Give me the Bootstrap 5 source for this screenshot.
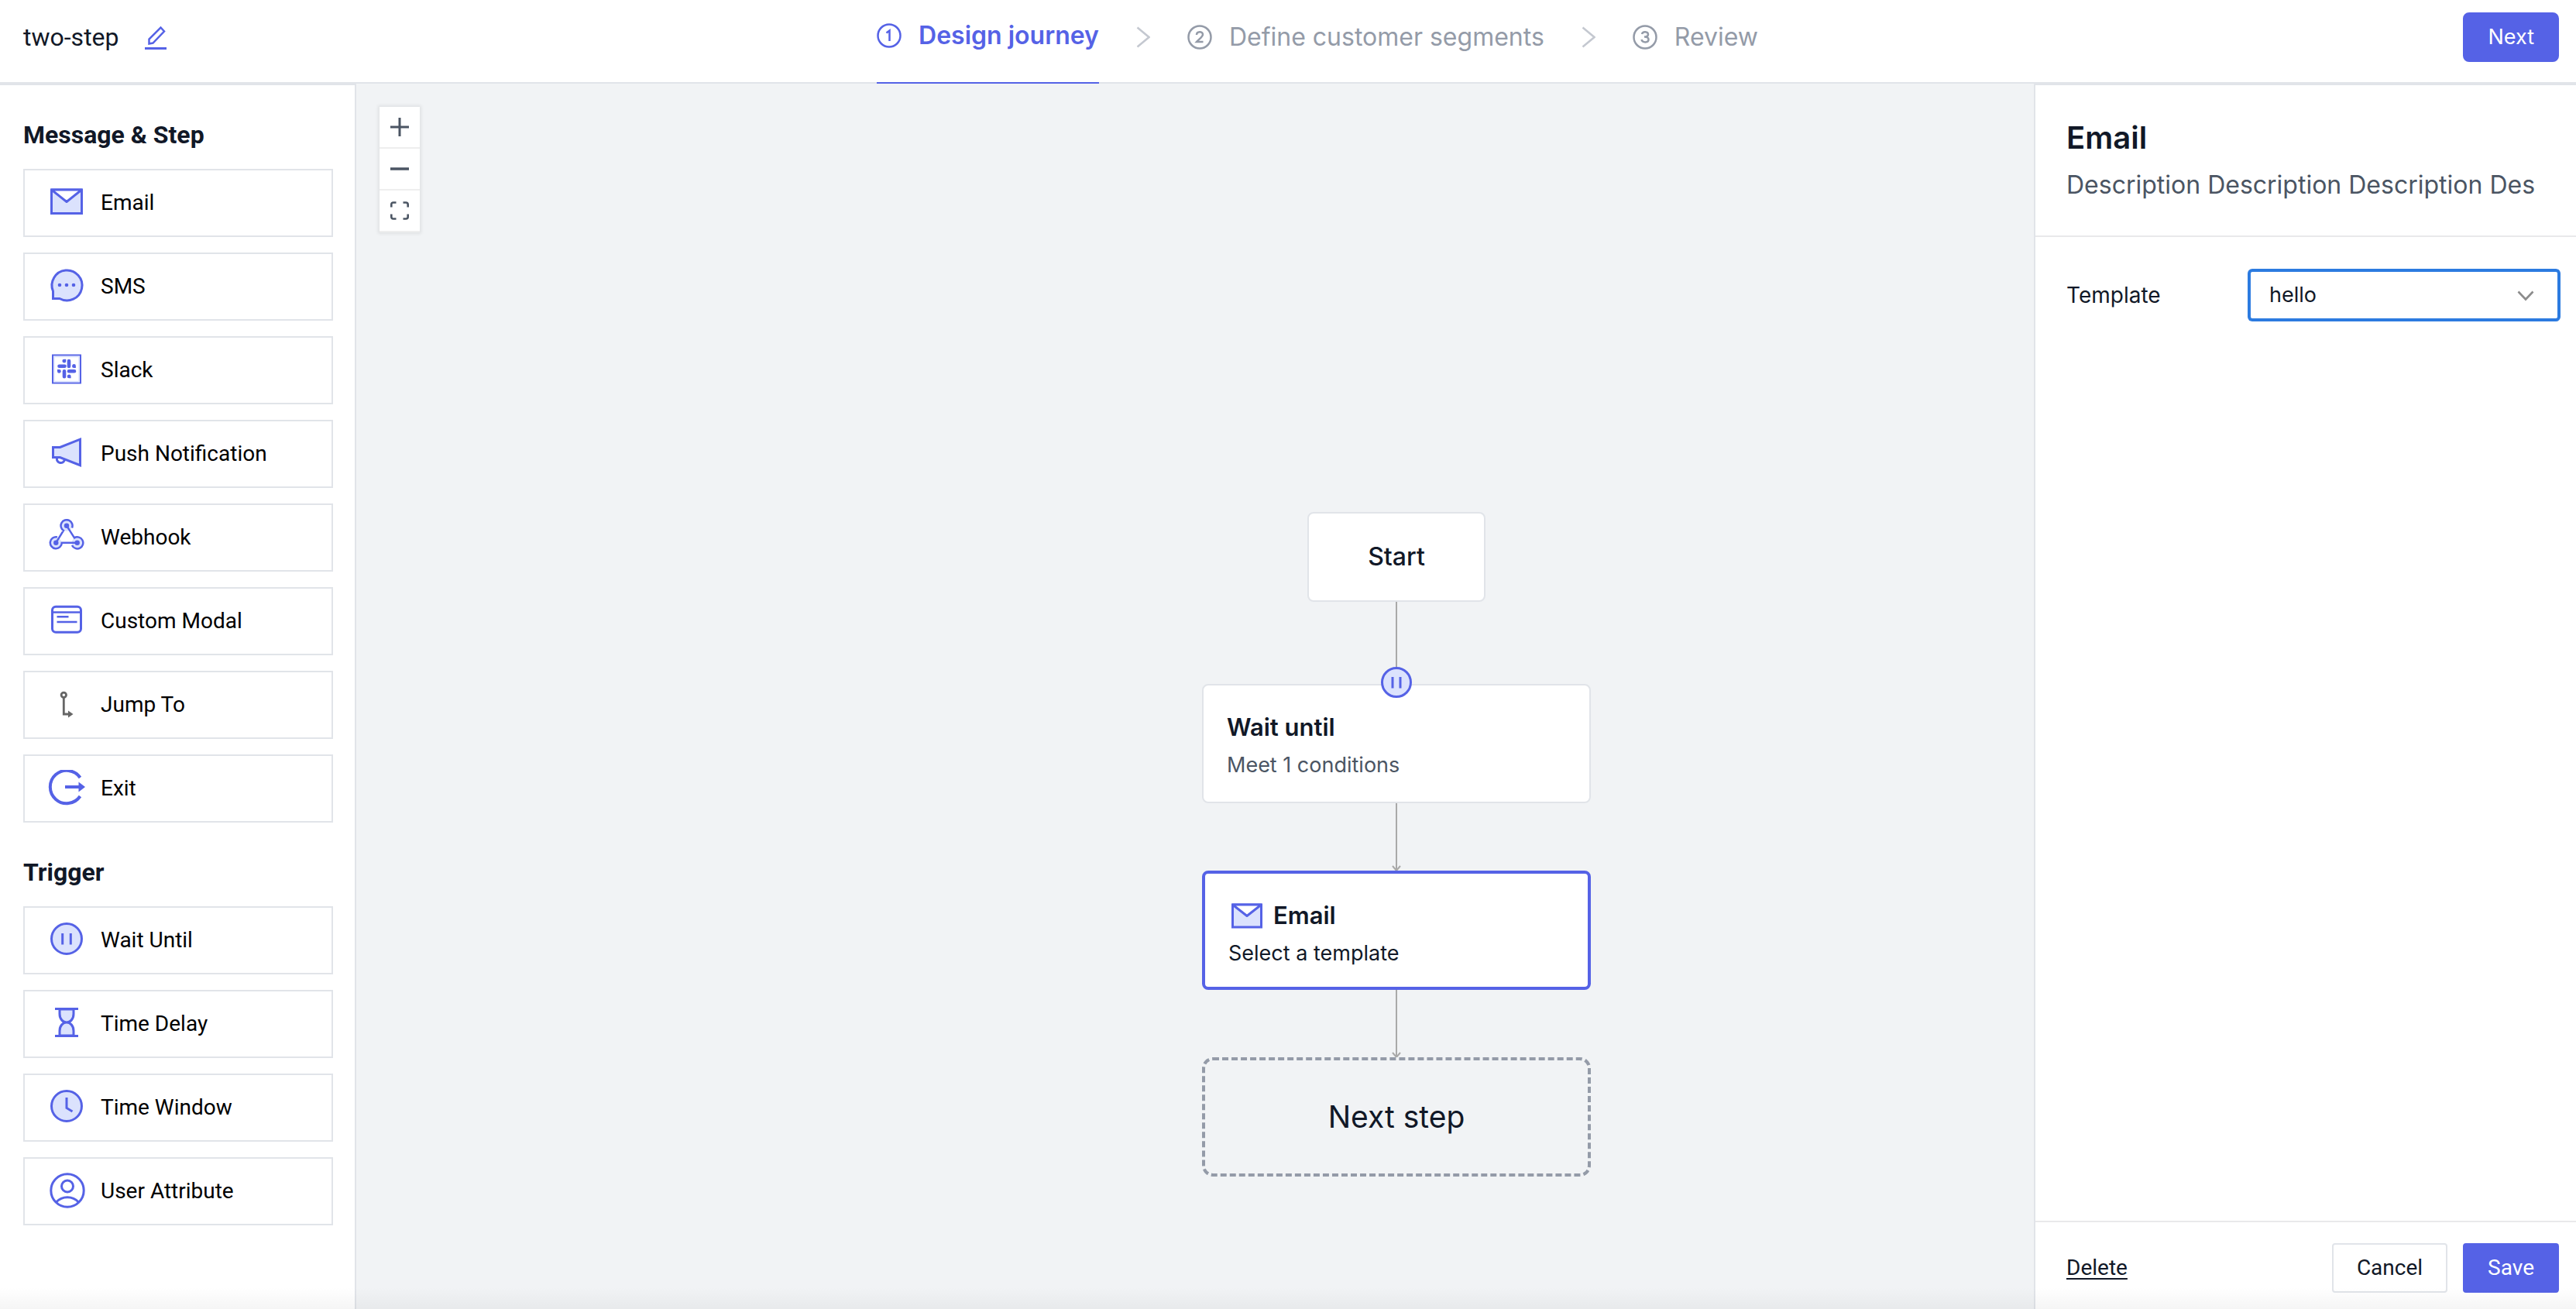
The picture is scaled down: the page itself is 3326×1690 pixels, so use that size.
<!DOCTYPE html>
<html lang="en">
<head>
<meta charset="utf-8">
<meta name="viewport" content="width=device-width, initial-scale=1">
<title>two-step</title>
<link href="https://cdn.jsdelivr.net/npm/bootstrap@5.3.0/dist/css/bootstrap.min.css" rel="stylesheet">
<style>
  :root { --accent:#5562e6; --tint:#dbe2fd; --ink:#111827; --soft:#4b5563; --muted:#949ba8; --line:#e1e4e9; --canvas:#f1f3f5; }
  body { font-family:Inter,"Liberation Sans",sans-serif; font-size:28px; line-height:40px; color:var(--ink); background:#fff; }
  h1, h2, p { margin:0; }
  .roboto { font-family:Roboto,"Liberation Sans",sans-serif; }
  .btn { --bs-btn-font-size:28px; --bs-btn-line-height:40px; --bs-btn-padding-x:30px; --bs-btn-padding-y:10px; --bs-btn-border-radius:4px; --bs-btn-border-width:2px; }
  .btn-accent { --bs-btn-color:#fff; --bs-btn-bg:var(--accent); --bs-btn-border-color:var(--accent); --bs-btn-hover-color:#fff; --bs-btn-hover-bg:#4350d4; }
  .btn-plain { --bs-btn-color:var(--ink); --bs-btn-bg:#fff; --bs-btn-border-color:var(--line); --bs-btn-hover-bg:#f6f7f9; }
  .btn-next { --bs-btn-border-radius:8px; --bs-btn-font-size:27px; }

  .topbar { height:108px; padding:0 22px 10px 30px; border-bottom:2px solid var(--line); }
  .journey-name { font-size:32px; font-weight:400; }
  .steps { font-size:32px; gap:48px; color:var(--muted); }
  .step { gap:22px; color:inherit; text-decoration:none; }
  .step.active { color:var(--accent); font-weight:600; height:108px; margin-bottom:-12px; padding-bottom:14px; border-bottom:2px solid var(--accent); }

  .palette { width:460px; padding:44px 28px 28px 30px; border-top:2px solid var(--line); border-right:2px solid var(--line); }
  .palette h2 { font-size:32px; font-weight:700; line-height:40px; margin-bottom:24px; }
  .palette ul { gap:20px; margin-bottom:44px; }
  .tile { height:88px; width:100%; gap:20px; padding:0 30px; background:#fff; border:2px solid var(--line); color:#000; text-align:left; }
  .ico { fill:none; stroke:var(--accent); stroke-width:3; flex:none; }
  .t { fill:var(--tint); } .s { fill:var(--accent); stroke:none; }

  .board { background:var(--canvas); }
  .zoomer { left:30px; top:30px; width:52px; box-shadow:0 0 4px 2px rgba(0,0,0,.07); }
  .zoomer button { height:54px; border:0; border-bottom:2px solid #eee; background:#fff; padding:0; }
  .flow { left:1092px; top:553px; width:502px; }
  .node { width:100%; height:154px; background:#fff; border:2px solid var(--line); border-radius:8px; padding:30px; }
  .node h2 { font-size:31px; font-weight:600; line-height:48px; }
  .node p { font-size:27px; line-height:50px; }
  .node-start { width:230px; height:116px; font-size:32px; font-weight:500; }
  .node-picked { border:4px solid var(--accent); }
  .node-open { background:none; border:4px dashed var(--muted); border-radius:14px; font-size:39px; color:var(--ink); }
  .edge { display:block; stroke:#a9a9a9; stroke-width:2; fill:none; }
  .pause { top:-26px; left:50%; margin-left:-22px; }

  .inspector { width:700px; border-top:2px solid var(--line); border-left:2px solid var(--line); }
  .inspector-head { padding:40px 0 32px 40px; border-bottom:2px solid #e9e9eb; }
  .inspector-head h2 { font-size:40px; font-weight:600; line-height:56px; }
  .inspector-head p { width:606px; font-size:32px; line-height:66px; color:var(--soft); white-space:nowrap; overflow:hidden; }
  .field { padding:43px 22px 0 40px; }
  .field label { line-height:64px; }
  .picker { width:400px; height:64px; }
  .picker select { height:64px; border:2px solid #2c7be0; border-radius:4px; box-shadow:0 0 0 2px #2c7be0; font-size:27px; line-height:40px; padding:0 60px 0 24px; background:#fff; color:var(--ink); }
  .picker svg { right:32px; top:26px; pointer-events:none; }
  .inspector-foot { padding:27px 22px 21px 40px; gap:20px; border-top:2px solid #e9e9eb; }
  .inspector-foot a { color:var(--ink); text-underline-offset:4px; }
  .fade-edge { height:28px; background:linear-gradient(rgba(0,0,0,0),rgba(0,0,0,.04)); pointer-events:none; }
</style>
</head>
<body class="vh-100 d-flex flex-column overflow-hidden position-relative">

<header class="topbar d-flex align-items-center justify-content-between flex-shrink-0">
  <div class="d-flex align-items-center">
    <h1 class="journey-name roboto">two-step</h1>
    <button type="button" class="border-0 bg-transparent p-0 ms-4 d-flex" aria-label="Rename">
      <svg class="ico" width="44" height="44" viewBox="0 0 44 44" stroke-width="3"><path d="M9 36.500h28" stroke-width="3"/><path d="M14.500 30.500v-6L29.500 9.500l4.500 5L19.500 29.500z" stroke-width="2.500"/></svg>
    </button>
  </div>
  <nav class="steps d-flex align-items-center" aria-label="Progress">
    <a href="#" class="step active d-flex align-items-center"><svg width="32" height="32" viewBox="0 0 32 32" fill="none" stroke="currentColor" stroke-width="2.500"><circle cx="16" cy="16" r="14.500"/><path d="M12.500 12.500L16.500 9.500V23"/></svg>Design journey</a>
    <svg width="18" height="28" viewBox="0 0 18 28" fill="none" stroke="#c4c8d0" stroke-width="2.500"><path d="M1.500 1.500L16.500 14L1.500 26.500"/></svg>
    <a href="#" class="step d-flex align-items-center"><svg width="32" height="32" viewBox="0 0 32 32" fill="none" stroke="currentColor" stroke-width="2.500"><circle cx="16" cy="16" r="14.500"/><path d="M12 13c0-5 8-5 8-.5 0 3-5 6-8 9.500h8.500"/></svg>Define customer segments</a>
    <svg width="18" height="28" viewBox="0 0 18 28" fill="none" stroke="#c4c8d0" stroke-width="2.500"><path d="M1.500 1.500L16.500 14L1.500 26.500"/></svg>
    <a href="#" class="step d-flex align-items-center"><svg width="32" height="32" viewBox="0 0 32 32" fill="none" stroke="currentColor" stroke-width="2.500"><circle cx="16" cy="16" r="14.500"/><path d="M12 12c1-4 8-3.500 8 .5 0 2-2 3-5 3 3.500 0 5.500 1 5.500 3.500 0 4.500-8 4.500-9 0"/></svg>Review</a>
  </nav>
  <button type="button" class="btn btn-accent btn-next">Next</button>
</header>

<main class="d-flex flex-grow-1">
  <aside class="palette roboto flex-shrink-0">
    <h2>Message &amp; Step</h2>
    <ul class="list-unstyled d-flex flex-column">
      <li><button type="button" class="tile d-flex align-items-center"><svg class="ico" width="48" height="48" viewBox="0 0 48 48"><path class="t" d="M4.500 7h39v30.500h-39z"/><path d="M4.500 7h39L24 22.500z" fill="#fff" stroke-linejoin="round"/></svg>Email</button></li>
      <li><button type="button" class="tile d-flex align-items-center"><svg class="ico" width="48" height="48" viewBox="0 0 48 48"><path class="t" d="M6.500 39.500V30A19.500 19.500 0 1 1 15 39.500z"/><g class="s"><circle cx="15" cy="22" r="2.300"/><circle cx="24" cy="22" r="2.300"/><circle cx="33" cy="22" r="2.300"/></g></svg>SMS</button></li>
      <li><button type="button" class="tile d-flex align-items-center"><svg class="ico" width="48" height="48" viewBox="0 0 48 48"><path d="M6 4.500h36v36H6z" stroke-width="2"/><path d="M8 6.500h32v32H8z" stroke="#dbe2fd" stroke-width="1.500"/><path d="M27 12v7M14.500 18.700h7M27 25.200h7M21 25.200v7M20.700 12h.3v.3M33.300 18.700h.3v-.3M14.500 25.200h-.2v.3M27 32h.3v-.3" stroke-width="4.600" stroke-linecap="round"/></svg>Slack</button></li>
      <li><button type="button" class="tile d-flex align-items-center"><svg class="ico" width="48" height="48" viewBox="0 0 48 48"><path class="t" d="M6.500 15.500h9L41.500 5.200v33.500L15.500 28.500h-9z"/><path d="M11.500 29.500a5 5 0 1 0 10 2"/></svg>Push Notification</button></li>
      <li><button type="button" class="tile d-flex align-items-center"><svg class="ico" width="48" height="48" viewBox="0 0 48 48"><g class="t" stroke="none"><circle cx="24" cy="8.700" r="7"/><circle cx="10.300" cy="30.700" r="7"/><circle cx="37.700" cy="30.700" r="7"/></g><g class="s"><circle cx="24" cy="8.700" r="3.200"/><circle cx="10.300" cy="30.700" r="3.200"/><circle cx="37.700" cy="30.700" r="3.200"/></g><path stroke-width="2.500" d="M10.300 30.700L20 15A7.500 7.500 0 1 1 31 11.500M24 8.700l10 15.700a7.500 7.500 0 1 1-3 9.600M37.700 30.700H17.800A7.500 7.500 0 1 1 12 23.400"/></svg>Webhook</button></li>
      <li><button type="button" class="tile d-flex align-items-center"><svg class="ico" width="48" height="48" viewBox="0 0 48 48"><rect x="5.500" y="5.200" width="37" height="33" rx="4.500"/><path stroke-width="2.500" d="M6 12.500h36M11.500 18.300h15M11.500 25h26"/></svg>Custom Modal</button></li>
      <li><button type="button" class="tile d-flex align-items-center"><svg class="ico" width="48" height="48" viewBox="0 0 48 48"><g stroke="#666" stroke-width="2.800"><circle cx="20.300" cy="11.300" r="3.200"/><path d="M20.300 15v21H27"/></g><path d="M26 31.500l6.500 4.500-6.500 4.500z" fill="#666" stroke="none"/></svg>Jump To</button></li>
      <li><button type="button" class="tile d-flex align-items-center"><svg class="ico" width="48" height="48" viewBox="0 0 48 48"><path stroke-width="4" d="M41.500 10A21.200 21.200 0 1 0 41.500 34M22 22h18"/><path class="s" d="M39.500 15.500L48 22l-8.500 6.500z"/></svg>Exit</button></li>
    </ul>
    <h2>Trigger</h2>
    <ul class="list-unstyled d-flex flex-column">
      <li><button type="button" class="tile d-flex align-items-center"><svg class="ico" width="48" height="48" viewBox="0 0 48 48"><circle class="t" cx="24" cy="22" r="19.500"/><path d="M18.700 15v14.500M29.300 15v14.500"/></svg>Wait Until</button></li>
      <li><button type="button" class="tile d-flex align-items-center"><svg class="ico" width="48" height="48" viewBox="0 0 48 48"><path class="t" d="M15 5v6c0 7 4.500 11 9 11s9-4 9-11V5zM15 39v-6c0-7 4.500-11 9-11s9 4 9 11v6z"/><path d="M9 4.500h30M9 39.500h30"/></svg>Time Delay</button></li>
      <li><button type="button" class="tile d-flex align-items-center"><svg class="ico" width="48" height="48" viewBox="0 0 48 48"><circle class="t" cx="24" cy="22" r="19.500"/><path d="M24 11v13.500l7.500 4.500"/></svg>Time Window</button></li>
      <li><button type="button" class="tile d-flex align-items-center"><svg class="ico" width="48" height="48" viewBox="0 0 48 48"><circle cx="25" cy="23" r="21.200"/><circle cx="25" cy="17.500" r="7.500"/><path d="M10.500 38c8-8.500 21-8.500 29 0"/></svg>User Attribute</button></li>
    </ul>
  </aside>

  <section class="board flex-grow-1 position-relative overflow-hidden" aria-label="Journey canvas">
    <div class="zoomer position-absolute d-flex flex-column">
      <button type="button" class="d-flex align-items-center justify-content-center" aria-label="Zoom in"><svg width="24" height="24" viewBox="0 0 24 24" stroke="#4b5563" stroke-width="3"><path d="M0 12h24M12 0v24"/></svg></button>
      <button type="button" class="d-flex align-items-center justify-content-center" aria-label="Zoom out"><svg width="24" height="24" viewBox="0 0 24 24" stroke="#4b5563" stroke-width="3.500"><path d="M0 12h24"/></svg></button>
      <button type="button" class="d-flex align-items-center justify-content-center" aria-label="Fit view"><svg width="24" height="24" viewBox="0 0 24 24" fill="none" stroke="#4b5563" stroke-width="2.600"><path d="M1.300 7.500V4q0-2.500 2.500-2.500H7.500M16.500 1.500H20q2.700 0 2.700 2.500V7.500M22.700 16.500V20q0 2.500-2.700 2.500H16.500M7.500 22.500H3.800q-2.500 0-2.500-2.500V16.500"/></svg></button>
    </div>

    <div class="flow position-absolute d-flex flex-column align-items-center">
      <div class="node node-start d-flex align-items-center justify-content-center p-0">Start</div>
      <svg class="edge" width="16" height="106" viewBox="0 0 16 106"><path d="M8 0v106"/></svg>
      <div class="node position-relative">
        <svg class="ico pause position-absolute" width="44" height="44" viewBox="0 0 44 44"><circle class="t" cx="22" cy="22" r="18.500"/><path d="M17 15v14.500M27 15v14.500"/></svg>
        <h2>Wait until</h2>
        <p style="color:var(--soft)">Meet 1 conditions</p>
      </div>
      <svg class="edge" width="16" height="87" viewBox="0 0 16 87"><path d="M8 0v87M3 81l5 6 5-6"/></svg>
      <div class="node node-picked">
        <h2 class="d-flex align-items-center"><svg class="ico me-2" width="50" height="44" viewBox="0 0 50 44"><path class="t" d="M5.500 8h37v29h-37z"/><path d="M5.500 8h37L24 22.500z" fill="#fff" stroke-linejoin="round"/></svg>Email</h2>
        <p>Select a template</p>
      </div>
      <svg class="edge" width="16" height="87" viewBox="0 0 16 87"><path d="M8 0v87M3 81l5 6 5-6"/></svg>
      <button type="button" class="node node-open">Next step</button>
    </div>
  </section>

  <aside class="inspector flex-shrink-0 d-flex flex-column">
    <div class="inspector-head">
      <h2>Email</h2>
      <p>Description Description Description Des</p>
    </div>
    <div class="field flex-grow-1 d-flex align-items-start justify-content-between">
      <label for="template">Template</label>
      <div class="picker position-relative">
        <select id="template" class="form-select"><option>hello</option></select>
        <svg class="position-absolute" width="22" height="14" viewBox="0 0 22 14" fill="none" stroke="#8c8c8c" stroke-width="2.600"><path d="M1.500 1.500L11 11.500L20.500 1.500"/></svg>
      </div>
    </div>
    <div class="inspector-foot roboto d-flex align-items-center">
      <a href="#" class="me-auto">Delete</a>
      <button type="button" class="btn btn-plain">Cancel</button>
      <button type="button" class="btn btn-accent">Save</button>
    </div>
  </aside>
</main>
<div class="fade-edge position-absolute bottom-0 start-0 end-0"></div>

<script src="https://cdn.jsdelivr.net/npm/bootstrap@5.3.0/dist/js/bootstrap.bundle.min.js"></script>
</body>
</html>
